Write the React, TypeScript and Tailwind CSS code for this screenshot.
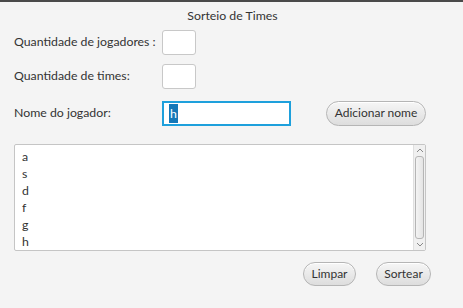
import React from 'react';

const font = { fontFamily: 'Lato, "Open Sans", sans-serif' };

function FxButton({ label, className }: { label: string; className: string }) {
    return (
        <button
            className={`flex items-center justify-center rounded-full border border-[#b5b5b5] bg-gradient-to-b from-[#f6f6f6] to-[#dddddd] text-[12px] text-[#333] shadow-[inset_0_1px_0_#fff] ${className}`}
        >
            {label}
        </button>
    );
}

export default function App() {
    const players = ['a', 's', 'd', 'f', 'g', 'h'];

    return (
        <div className="w-[463px] h-[308px] bg-[#f4f4f4] border-t-2 border-[#4a4a4a] text-[12.3px] text-[#333] relative overflow-hidden" style={font}>
            {/* Title */}
            <div className="h-[28px] flex items-center justify-center pl-[2px]">Sorteio de Times</div>

            {/* Quantidade de jogadores */}
            <div className="flex items-center h-[25px]">
                <span className="w-[162px] shrink-0 pl-[14px] whitespace-nowrap">Quantidade de jogadores :</span>
                <div className="w-[34px] h-[25px] bg-white border border-[#c8c8c8] rounded-[3px]" />
            </div>

            {/* Quantidade de times */}
            <div className="flex items-center h-[25px] mt-[9px]">
                <span className="w-[162px] shrink-0 pl-[14px] whitespace-nowrap">Quantidade de times:</span>
                <div className="w-[34px] h-[25px] bg-white border border-[#c8c8c8] rounded-[3px]" />
            </div>

            {/* Nome do jogador */}
            <div className="flex items-center h-[26px] mt-[11px]">
                <span className="w-[162px] shrink-0 pl-[14px] whitespace-nowrap">Nome do jogador:</span>
                <div className="w-[129px] h-[25px] bg-white border-2 border-[#1ea0dc] flex items-center pl-[5px]">
                    <span className="bg-[#1478b8] text-white leading-[19px] px-[1px]">h</span>
                </div>
                <FxButton label="Adicionar nome" className="ml-[35px] w-[100px] h-[25px]" />
            </div>

            {/* Lista */}
            <div className="ml-[14px] mt-[18px] w-[412px] h-[107px] bg-white border border-[#c5c5c5] rounded-[2px] flex">
                <div className="flex-1 pl-[7px] pt-[3px] flex flex-col">
                    {players.map((p) => (
                        <span key={p} className="leading-[17px] h-[17px]">{p}</span>
                    ))}
                </div>
                <div className="w-[12px] bg-[#f0f0f0] border-l border-[#e0e0e0] flex flex-col items-center">
                    <svg width="8" height="10" viewBox="0 0 8 10" className="mt-[1px]">
                        <path d="M1 6 L4 3 L7 6" fill="none" stroke="#888" strokeWidth="1" />
                    </svg>
                    <div className="w-[9px] flex-1 rounded-[3px] border border-[#b5b5b5] bg-gradient-to-r from-[#f4f4f4] to-[#e4e4e4]" />
                    <svg width="8" height="10" viewBox="0 0 8 10" className="mb-[1px]">
                        <path d="M1 4 L4 7 L7 4" fill="none" stroke="#888" strokeWidth="1" />
                    </svg>
                </div>
            </div>

            {/* Ações */}
            <div className="flex justify-end mt-[11px] pr-[32px] gap-[20px]">
                <FxButton label="Limpar" className="w-[53px] h-[24px]" />
                <FxButton label="Sortear" className="w-[55px] h-[24px]" />
            </div>
        </div>
    );
}
